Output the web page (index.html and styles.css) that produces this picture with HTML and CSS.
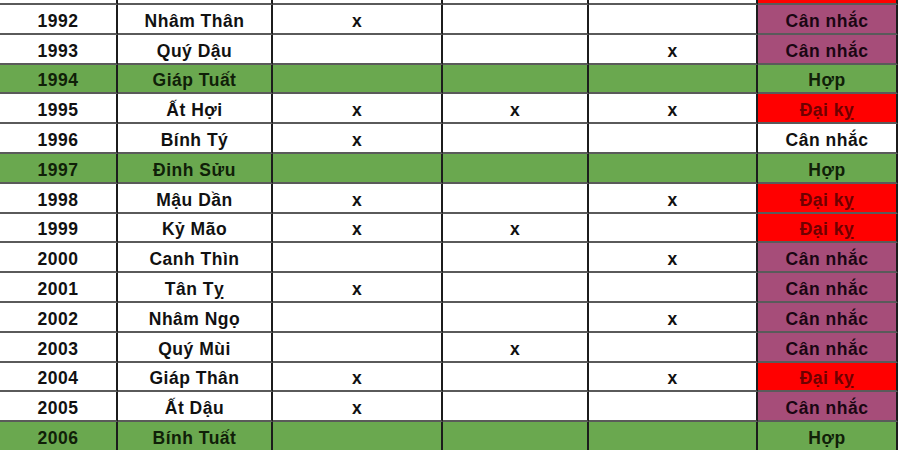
FILE: index.html
```html
<!DOCTYPE html>
<html lang="vi">
<head>
<meta charset="utf-8">
<title>Bảng tuổi</title>
<link rel="stylesheet" href="styles.css">
</head>
<body>
<div class="sheet">
  <div class="cell stub"></div><div class="cell stub"></div><div class="cell stub"></div><div class="cell stub"></div><div class="cell stub"></div><div class="cell stub red"></div>

  <div class="cell">1992</div><div class="cell">Nhâm Thân</div><div class="cell">x</div><div class="cell"></div><div class="cell"></div><div class="cell purple">Cân nhắc</div>

  <div class="cell">1993</div><div class="cell">Quý Dậu</div><div class="cell"></div><div class="cell"></div><div class="cell">x</div><div class="cell purple">Cân nhắc</div>

  <div class="cell green">1994</div><div class="cell green">Giáp Tuất</div><div class="cell green"></div><div class="cell green"></div><div class="cell green"></div><div class="cell green">Hợp</div>

  <div class="cell">1995</div><div class="cell">Ất Hợi</div><div class="cell">x</div><div class="cell">x</div><div class="cell">x</div><div class="cell red">Đại kỵ</div>

  <div class="cell">1996</div><div class="cell">Bính Tý</div><div class="cell">x</div><div class="cell"></div><div class="cell"></div><div class="cell">Cân nhắc</div>

  <div class="cell green">1997</div><div class="cell green">Đinh Sửu</div><div class="cell green"></div><div class="cell green"></div><div class="cell green"></div><div class="cell green">Hợp</div>

  <div class="cell">1998</div><div class="cell">Mậu Dần</div><div class="cell">x</div><div class="cell"></div><div class="cell">x</div><div class="cell red">Đại kỵ</div>

  <div class="cell">1999</div><div class="cell">Kỷ Mão</div><div class="cell">x</div><div class="cell">x</div><div class="cell"></div><div class="cell red">Đại kỵ</div>

  <div class="cell">2000</div><div class="cell">Canh Thìn</div><div class="cell"></div><div class="cell"></div><div class="cell">x</div><div class="cell purple">Cân nhắc</div>

  <div class="cell">2001</div><div class="cell">Tân Tỵ</div><div class="cell">x</div><div class="cell"></div><div class="cell"></div><div class="cell purple">Cân nhắc</div>

  <div class="cell">2002</div><div class="cell">Nhâm Ngọ</div><div class="cell"></div><div class="cell"></div><div class="cell">x</div><div class="cell purple">Cân nhắc</div>

  <div class="cell">2003</div><div class="cell">Quý Mùi</div><div class="cell"></div><div class="cell">x</div><div class="cell"></div><div class="cell purple">Cân nhắc</div>

  <div class="cell">2004</div><div class="cell">Giáp Thân</div><div class="cell">x</div><div class="cell"></div><div class="cell">x</div><div class="cell red">Đại kỵ</div>

  <div class="cell">2005</div><div class="cell">Ất Dậu</div><div class="cell">x</div><div class="cell"></div><div class="cell"></div><div class="cell purple">Cân nhắc</div>

  <div class="cell green">2006</div><div class="cell green">Bính Tuất</div><div class="cell green"></div><div class="cell green"></div><div class="cell green"></div><div class="cell green">Hợp</div>
</div>
</body>
</html>
```

FILE: styles.css
```css
html, body {
  margin: 0;
  padding: 0;
  background: #ffffff;
  overflow: hidden;
}

.sheet {
  display: grid;
  grid-template-columns: 118px 155px 170px 146px 169px 140px;
  grid-template-rows: 5px;
  grid-auto-rows: 29.8px;
  width: 898px;
  font-family: "Liberation Sans", Arial, sans-serif;
  font-weight: bold;
  font-size: 17.5px;
  letter-spacing: 0.5px;
  color: #111111;
}

.cell {
  box-sizing: border-box;
  display: flex;
  align-items: center;
  justify-content: center;
  padding-top: 5px;
  border-right: 2px solid #1c1c1c;
  border-bottom: 2px solid #5a5a5a;
  background: #ffffff;
  white-space: nowrap;
}

.stub {
  padding-top: 0;
}

.green {
  background: #6aa84f;
  color: #102008;
}

.purple {
  background: #a64d79;
  color: #1a0612;
}

.red {
  background: #ff0000;
  color: #6e0000;
}
```
